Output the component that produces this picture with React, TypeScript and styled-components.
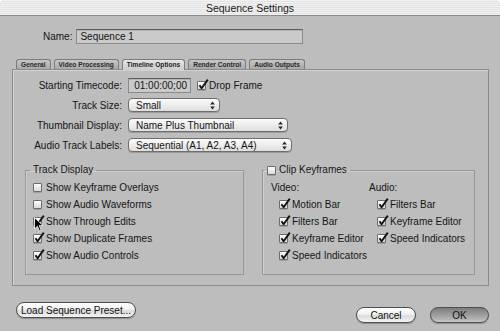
import React from 'react';
import styled, { createGlobalStyle } from 'styled-components';

const GlobalStyle = createGlobalStyle`
  html, body {
    margin: 0;
    padding: 0;
    background: #ffffff;
    overflow: hidden;
  }
`;

const Window = styled.div`
  position: relative;
  width: 500px;
  height: 331px;
  background: #bdbdbd;
  border-radius: 5px 5px 0 0;
  overflow: hidden;
  display: flex;
  flex-direction: column;
  font-family: "Liberation Sans", Arial, sans-serif;
  font-size: 10px;
  color: #151515;
`;

const TitleBar = styled.div`
  flex: none;
  height: 15px;
  display: flex;
  align-items: center;
  justify-content: center;
  background: repeating-linear-gradient(to bottom, #f2f2f2 0 1px, #e3e3e3 1px 2px);
  border-bottom: 1px solid #8a8a8a;
  font-size: 10.5px;
  color: #1a1a1a;
`;

const NameRow = styled.div`
  display: flex;
  align-items: center;
  gap: 4px;
  margin: 13px 0 0 43px;
  height: 15px;
`;

const TextField = styled.div<{ $w: number; $align?: string }>`
  box-sizing: border-box;
  width: ${(p) => p.$w}px;
  height: 15px;
  line-height: 13px;
  padding: 0 3px;
  text-align: ${(p) => p.$align || 'left'};
  background: #cacaca;
  border: 1px solid #8a8a8a;
  border-top-color: #5e5e5e;
  box-shadow: inset 0 1px 0 #b2b2b2;
`;

const TabStrip = styled.div`
  display: flex;
  align-items: flex-end;
  gap: 3px;
  height: 11px;
  margin: 14px 0 0 16px;
`;

const Tab = styled.div<{ $active?: boolean }>`
  height: ${(p) => (p.$active ? 11 : 10)}px;
  box-sizing: border-box;
  padding: 0 4px;
  line-height: ${(p) => (p.$active ? 10 : 9)}px;
  font-size: 6.6px;
  font-weight: bold;
  white-space: nowrap;
  color: ${(p) => (p.$active ? '#1c1c1c' : '#2a2a2a')};
  border: 1px solid #7c7c7c;
  border-bottom: none;
  border-radius: 3px 3px 0 0;
  background: ${(p) =>
    p.$active
      ? 'linear-gradient(#e4e4e4, #cdcdcd)'
      : 'linear-gradient(#c6c6c6, #a9a9a9)'};
  position: relative;
  z-index: ${(p) => (p.$active ? 2 : 0)};
  margin-bottom: ${(p) => (p.$active ? -1 : 0)}px;
`;

const Pane = styled.div`
  box-sizing: border-box;
  height: 217px;
  margin: 0 11px 0 12px;
  border: 1px solid #8c8c8c;
  box-shadow: inset 1px 1px 0 #d2d2d2;
  display: flex;
  flex-direction: column;
`;

const FormGrid = styled.div`
  display: grid;
  grid-template-columns: 109px auto;
  grid-template-rows: 19px 20px 20px 20px;
  column-gap: 6px;
  align-items: center;
  padding-top: 6px;
`;

const Label = styled.div`
  justify-self: end;
  white-space: nowrap;
`;

const Inline = styled.div`
  display: flex;
  align-items: center;
`;

const Popup = styled.div<{ $w: number }>`
  box-sizing: border-box;
  width: ${(p) => p.$w}px;
  height: 14px;
  display: flex;
  align-items: center;
  justify-content: space-between;
  padding: 0 4px 0 7px;
  border: 1px solid #6e6e6e;
  border-radius: 4px;
  background: linear-gradient(#fbfbfb, #ececec 55%, #dedede);
  box-shadow: 0 1px 0 rgba(0, 0, 0, 0.18);
  white-space: nowrap;
`;

const GroupRow = styled.div`
  display: flex;
  gap: 18px;
  margin: 9px 0 0 12px;
`;

const Group = styled.fieldset<{ $w: number; $pad: number }>`
  box-sizing: border-box;
  width: ${(p) => p.$w}px;
  height: 111px;
  margin: 0;
  padding: 0 0 0 ${(p) => p.$pad}px;
  border: 1px solid #979797;
  box-shadow: inset 1px 1px 0 #cfcfcf;
  min-width: 0;
`;

const Legend = styled.legend<{ $shift: number }>`
  display: flex;
  align-items: center;
  gap: 3px;
  padding: 0 3px;
  margin-left: ${(p) => p.$shift}px;
  line-height: 12px;
  height: 12px;
`;

const CheckList = styled.div`
  display: flex;
  flex-direction: column;
  margin-top: 3px;
`;

const CheckRow = styled.div`
  display: flex;
  align-items: center;
  gap: 4px;
  height: 17px;
  white-space: nowrap;
`;

const Columns = styled.div`
  display: flex;
  margin-top: 3px;
`;

const Column = styled.div<{ $w: number }>`
  width: ${(p) => p.$w}px;
  display: flex;
  flex-direction: column;
`;

const ColumnHead = styled.div`
  height: 17px;
  line-height: 17px;
`;

const Indented = styled.div`
  padding-left: 8px;
  display: flex;
  flex-direction: column;
`;

const Box = styled.span`
  position: relative;
  flex: none;
  box-sizing: border-box;
  width: 9px;
  height: 9px;
  border: 1px solid #6c6c6c;
  border-radius: 1px;
  background: linear-gradient(#fdfdfd, #d9d9d9);
  box-shadow: 0 1px 0 rgba(0, 0, 0, 0.15);

  svg {
    position: absolute;
    left: 0;
    top: -3px;
  }
`;

const ButtonRow = styled.div`
  display: flex;
  justify-content: space-between;
  align-items: flex-start;
  padding: 0 11px 0 16px;
  margin-top: 16px;
`;

const RightButtons = styled.div`
  display: flex;
  gap: 14px;
  margin-top: 5px;
`;

const PillButton = styled.div<{ $w: number; $default?: boolean }>`
  box-sizing: border-box;
  width: ${(p) => p.$w}px;
  height: 16px;
  display: flex;
  align-items: center;
  justify-content: center;
  border: 1px solid #4e4e4e;
  border-radius: 8px;
  white-space: nowrap;
  background: ${(p) =>
    p.$default
      ? 'linear-gradient(#7c7c7c, #9b9b9b 45%, #b3b3b3 80%, #c9c9c9)'
      : 'linear-gradient(#ffffff, #f1f1f1 45%, #dcdcdc 55%, #f3f3f3)'};
  box-shadow: 0 1px 1px rgba(0, 0, 0, 0.25);
  color: #111;
`;

const Cursor = styled.svg`
  position: absolute;
  left: 34px;
  top: 217px;
`;

const Check: React.FC<{ on?: boolean }> = ({ on }) => (
  <Box>
    {on && (
      <svg width="11" height="11" viewBox="0 0 11 11">
        <path d="M1.5 6.2 L3.6 9.2 L9.8 0.6" fill="none" stroke="#111" strokeWidth="1.9" strokeLinejoin="round" />
      </svg>
    )}
  </Box>
);

const Arrows: React.FC = () => (
  <svg width="5" height="9" viewBox="0 0 5 9">
    <path d="M2.5 0.5 L4.8 3.6 L0.2 3.6 Z" fill="#222" />
    <path d="M2.5 8.5 L4.8 5.4 L0.2 5.4 Z" fill="#222" />
  </svg>
);

const Item: React.FC<{ on?: boolean; children: React.ReactNode }> = ({ on, children }) => (
  <CheckRow>
    <Check on={on} />
    {children}
  </CheckRow>
);

const tabs = ['General', 'Video Processing', 'Timeline Options', 'Render Control', 'Audio Outputs'];

export default function App() {
  return (
    <Window>
      <GlobalStyle />
      <TitleBar>Sequence Settings</TitleBar>

      <NameRow>
        <span>Name:</span>
        <TextField $w={227}>Sequence 1</TextField>
      </NameRow>

      <TabStrip>
        {tabs.map((t) => (
          <Tab key={t} $active={t === 'Timeline Options'}>
            {t}
          </Tab>
        ))}
      </TabStrip>

      <Pane>
        <FormGrid>
          <Label>Starting Timecode:</Label>
          <Inline>
            <TextField $w={63} $align="right">01:00:00;00</TextField>
            <CheckRow style={{ marginLeft: 6, gap: 3 }}>
              <Check on />
              Drop Frame
            </CheckRow>
          </Inline>

          <Label>Track Size:</Label>
          <Popup $w={92}>
            Small
            <Arrows />
          </Popup>

          <Label>Thumbnail Display:</Label>
          <Popup $w={160}>
            Name Plus Thumbnail
            <Arrows />
          </Popup>

          <Label>Audio Track Labels:</Label>
          <Popup $w={164}>
            Sequential (A1, A2, A3, A4)
            <Arrows />
          </Popup>
        </FormGrid>

        <GroupRow>
          <Group $w={219} $pad={7}>
            <Legend $shift={-3}>Track Display</Legend>
            <CheckList>
              <Item>Show Keyframe Overlays</Item>
              <Item>Show Audio Waveforms</Item>
              <Item on>Show Through Edits</Item>
              <Item on>Show Duplicate Frames</Item>
              <Item on>Show Audio Controls</Item>
            </CheckList>
          </Group>

          <Group $w={213} $pad={8}>
            <Legend $shift={-7}>
              <Check />
              Clip Keyframes
            </Legend>
            <Columns>
              <Column $w={98}>
                <ColumnHead>Video:</ColumnHead>
                <Indented>
                  <Item on>Motion Bar</Item>
                  <Item on>Filters Bar</Item>
                  <Item on>Keyframe Editor</Item>
                  <Item on>Speed Indicators</Item>
                </Indented>
              </Column>
              <Column $w={100}>
                <ColumnHead>Audio:</ColumnHead>
                <Indented>
                  <Item on>Filters Bar</Item>
                  <Item on>Keyframe Editor</Item>
                  <Item on>Speed Indicators</Item>
                </Indented>
              </Column>
            </Columns>
          </Group>
        </GroupRow>
      </Pane>

      <ButtonRow>
        <PillButton $w={120}>Load Sequence Preset...</PillButton>
        <RightButtons>
          <PillButton $w={60}>Cancel</PillButton>
          <PillButton $w={59} $default>
            OK
          </PillButton>
        </RightButtons>
      </ButtonRow>

      <Cursor width="10" height="15" viewBox="0 0 10 15">
        <path d="M0.5 0.5 L0.5 12 L3.4 9.3 L5.5 14 L7.2 13.2 L5.2 8.6 L9 8.6 Z" fill="#000" stroke="#fff" strokeWidth="0.8" />
      </Cursor>
    </Window>
  );
}
